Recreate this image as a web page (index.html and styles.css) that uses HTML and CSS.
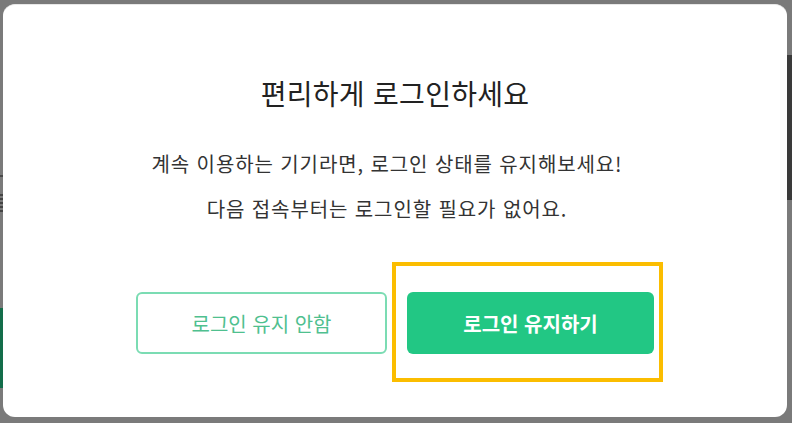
FILE: index.html
```html
<!DOCTYPE html>
<html lang="ko">
<head>
<meta charset="utf-8">
<link rel="stylesheet" href="styles.css">
</head>
<body>
<div class="page">
  <div class="edge-left">
    <div class="mark mark-a"></div>
    <div class="mark mark-b"></div>
    <div class="green-strip"></div>
  </div>
  <div class="dialog">
    <h1 class="title">편리하게 로그인하세요</h1>
    <p class="desc">계속 이용하는 기기라면, 로그인 상태를 유지해보세요!<br>다음 접속부터는 로그인할 필요가 없어요.</p>
    <div class="actions">
      <button class="btn btn-outline">로그인 유지 안함</button>
      <div class="primary-wrap">
        <button class="btn btn-primary">로그인 유지하기</button>
        <div class="highlight"></div>
      </div>
    </div>
  </div>
  <div class="edge-right">
    <div class="dark-bar"></div>
  </div>
</div>
</body>
</html>
```
FILE: styles.css
```css
* { box-sizing: border-box; }
html, body {
  margin: 0;
  padding: 0;
  width: 792px;
  height: 423px;
  overflow: hidden;
  background: #7a7a7a;
  font-family: "Noto Sans CJK KR", "Noto Sans", sans-serif;
}
.page {
  display: flex;
  height: 423px;
  padding: 4px 0 6px 0;
}
.edge-left {
  width: 3px;
  display: flex;
  flex-direction: column;
  margin-top: -4px;
}
.mark { background: #4a4a4a; width: 3px; }
.mark-a { height: 2px; margin-top: 175px; }
.mark-b { height: 20px; margin-top: 17px; background: repeating-linear-gradient(#444 0 2px, #7a7a7a 2px 4px); }
.green-strip {
  margin-top: 94px;
  height: 80px;
  background: #136d4a;
}
.edge-right {
  width: 5px;
  margin-top: -4px;
}
.dark-bar {
  margin-top: 55px;
  height: 145px;
  background: #3a3a3a;
}
.dialog {
  width: 784px;
  height: 413px;
  background: #fff;
  border-radius: 12px;
  border-top: 1px solid #e8e8e8;
  display: flex;
  flex-direction: column;
  align-items: center;
}
.title {
  margin: 70px 0 0 0;
  font-size: 28px;
  line-height: 36px;
  font-weight: 400;
  color: #222;
  letter-spacing: 0.3px;
}
.desc {
  margin: 30px 0 0 0;
  padding-right: 16px;
  font-size: 20px;
  letter-spacing: 0.9px;
  line-height: 45px;
  color: #333;
  text-align: center;
}
.actions {
  display: flex;
  gap: 20px;
  margin-top: 61px;
}
.btn {
  width: 251px;
  height: 62px;
  border-radius: 6px;
  font-family: inherit;
  font-size: 20px;
  cursor: pointer;
}
.btn-outline {
  background: #fff;
  border: 2px solid #7bdcb3;
  color: #4fc08f;
  font-weight: 400;
}
.btn-primary {
  width: 247px;
  background: #22c784;
  border: none;
  color: #fff;
  font-weight: 700;
}
.primary-wrap {
  position: relative;
}
.highlight {
  position: absolute;
  left: -15px;
  top: -30px;
  right: -9px;
  bottom: -28px;
  border: 4px solid #fbbd00;
  pointer-events: none;
}
```
